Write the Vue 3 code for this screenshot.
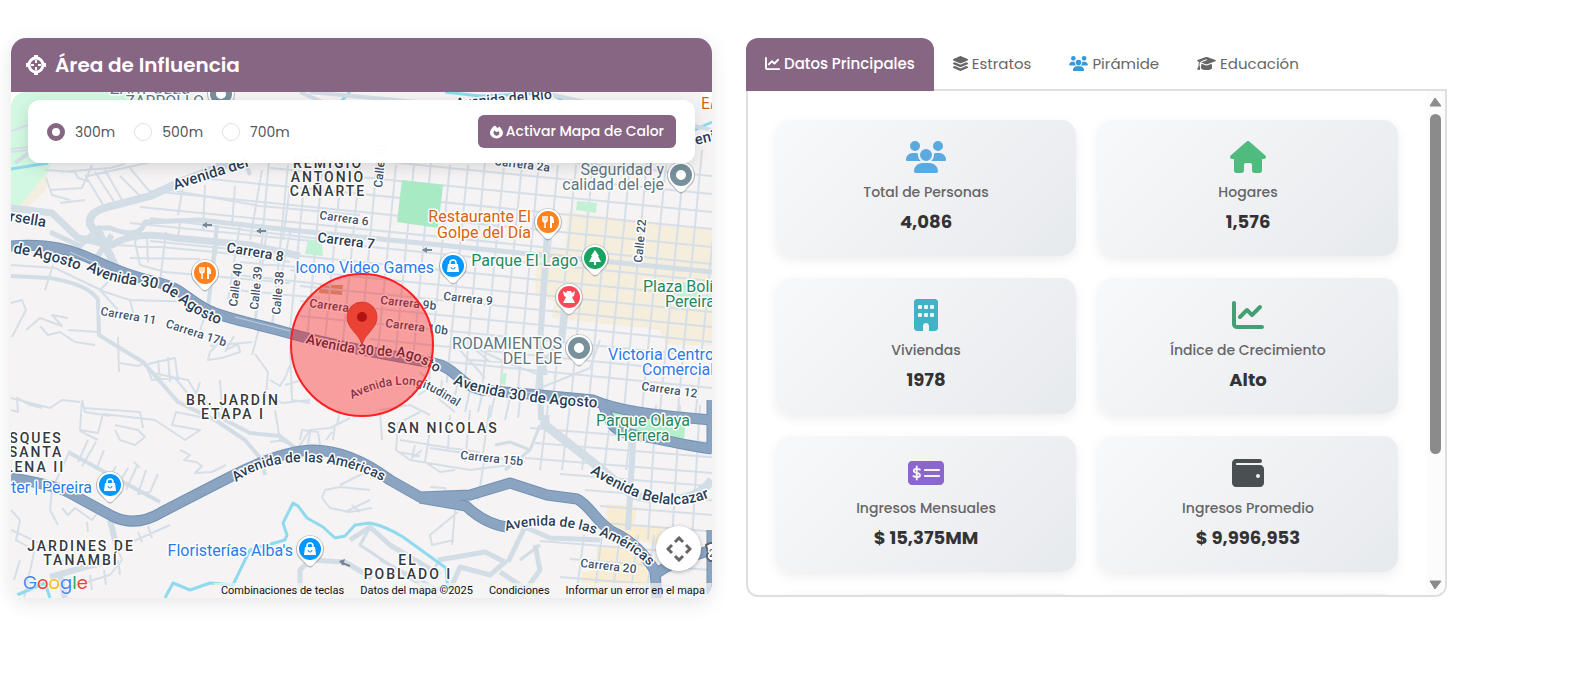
<script setup>
import { ref } from 'vue'

const radius = ref('300m')
const radii = ['300m', '500m', '700m']
const activeTab = ref('Datos Principales')

const icons = {
  users: { box: '0 0 640 512', d: 'M144 0a80 80 0 1 1 0 160A80 80 0 1 1 144 0zM512 0a80 80 0 1 1 0 160A80 80 0 1 1 512 0zM0 298.7C0 239.8 47.8 192 106.7 192h42.7c15.9 0 31 3.5 44.6 9.7c-1.3 7.2-1.9 14.7-1.9 22.3c0 38.2 16.8 72.5 43.3 96H21.3C9.6 320 0 310.4 0 298.7zM405.3 320c26.6-23.5 42.6-57.8 42.6-96c0-7.6-.7-15-1.9-22.3c13.6-6.3 28.7-9.7 44.6-9.7h42.7C592.2 192 640 239.8 640 298.7c0 11.8-9.6 21.3-21.3 21.3H405.3zM224 224a96 96 0 1 1 192 0 96 96 0 1 1 -192 0zM128 485.3C128 411.7 187.7 352 261.3 352H378.7C452.3 352 512 411.7 512 485.3c0 14.7-11.9 26.7-26.7 26.7H154.7c-14.7 0-26.7-11.9-26.7-26.7z' },
  house: { box: '0 0 576 512', d: 'M575.8 255.5c0 18-15 32.1-32 32.1h-32l.7 160.2c0 2.7-.2 5.4-.5 8.1V472c0 22.1-17.9 40-40 40H456c-1.1 0-2.2 0-3.3-.1c-1.4 .1-2.8 .1-4.2 .1H416 392c-22.1 0-40-17.9-40-40V448 384c0-17.7-14.3-32-32-32H256c-17.7 0-32 14.3-32 32v64 24c0 22.1-17.9 40-40 40H160 128.1c-1.5 0-3-.1-4.5-.2c-1.2 .1-2.4 .2-3.6 .2H104c-22.1 0-40-17.9-40-40V360c0-.9 0-1.9 .1-2.8V287.6H32c-18 0-32-14-32-32.1c0-9 3-17 10-24L266.4 8c7-7 15-8 22-8s15 2 21 7L564.8 231.5c8 7 12 15 11 24z' },
  building: { box: '0 0 384 512', d: 'M48 0C21.500 0 0 21.500 0 48V464c0 26.500 21.500 48 48 48h96V432c0-26.500 21.500-48 48-48s48 21.500 48 48v80h96c26.500 0 48-21.500 48-48V48c0-26.500-21.500-48-48-48zM80 96h32q16 0 16 16v32q0 16-16 16H80q-16 0-16-16v-32q0-16 16-16zM176 96h32q16 0 16 16v32q0 16-16 16h-32q-16 0-16-16v-32q0-16 16-16zM272 96h32q16 0 16 16v32q0 16-16 16h-32q-16 0-16-16v-32q0-16 16-16zM80 224h32q16 0 16 16v32q0 16-16 16H80q-16 0-16-16v-32q0-16 16-16zM176 224h32q16 0 16 16v32q0 16-16 16h-32q-16 0-16-16v-32q0-16 16-16zM272 224h32q16 0 16 16v32q0 16-16 16h-32q-16 0-16-16v-32q0-16 16-16z' },
  chart: { box: '0 0 512 512', d: 'M64 64c0-17.700-14.300-32-32-32S0 46.300 0 64V400c0 44.200 35.800 80 80 80H480c17.700 0 32-14.300 32-32s-14.300-32-32-32H80c-8.800 0-16-7.200-16-16V64zm406.600 86.600c12.500-12.500 12.500-32.800 0-45.300s-32.800-12.500-45.300 0L320 210.700l-57.400-57.400c-12.500-12.500-32.800-12.500-45.300 0l-112 112c-12.500 12.500-12.500 32.800 0 45.300s32.800 12.500 45.300 0L240 221.300l57.400 57.400c12.500 12.500 32.800 12.500 45.300 0l128-128z' },
  check: { box: '0 0 576 512', d: 'M64 64C28.700 64 0 92.700 0 128V384c0 35.300 28.700 64 64 64H512c35.300 0 64-28.700 64-64V128c0-35.300-28.700-64-64-64zM272 192H496c8.800 0 16 7.200 16 16s-7.200 16-16 16H272c-8.800 0-16-7.200-16-16s7.200-16 16-16zM272 288H496c8.800 0 16 7.200 16 16s-7.200 16-16 16H272c-8.800 0-16-7.200-16-16s7.200-16 16-16z', line: 'M140 152V360M190 201C160 186 94 180 92 222C90 266 194 242 192 290C190 330 124 326 86 307' },
  wallet: { box: '0 0 512 512', d: 'M64 32C28.700 32 0 60.700 0 96V416c0 35.300 28.700 64 64 64H448c35.300 0 64-28.700 64-64V192c0-35.300-28.700-64-64-64H80c-8.800 0-16-7.200-16-16s7.200-16 16-16H448c17.700 0 32-14.300 32-32s-14.300-32-32-32H64zM416 272a32 32 0 1 1 0 64 32 32 0 1 1 0-64z' },
  layers: { box: '32 0 512 512', d: 'M264.500 5.200c14.900-6.900 32.100-6.900 47 0l218.600 101c8.500 3.900 13.900 12.400 13.900 21.800s-5.400 17.900-13.900 21.800l-218.600 101c-14.900 6.900-32.100 6.900-47 0L45.900 149.800C37.400 145.800 32 137.300 32 128s5.400-17.900 13.900-21.800L264.500 5.200zM476.900 209.600l53.200 24.600c8.500 3.900 13.900 12.400 13.900 21.800s-5.400 17.900-13.900 21.800l-218.600 101c-14.900 6.900-32.100 6.900-47 0L45.900 277.800C37.400 273.800 32 265.300 32 256s5.400-17.900 13.900-21.800l53.200-24.600 152 70.200c23.400 10.800 50.400 10.800 73.800 0l152-70.200zm-152 198.200l152-70.200 53.200 24.600c8.500 3.900 13.900 12.400 13.900 21.800s-5.400 17.900-13.900 21.800l-218.600 101c-14.900 6.900-32.100 6.900-47 0L45.900 405.800C37.400 401.800 32 393.300 32 384s5.400-17.900 13.900-21.800l53.200-24.600 152 70.200c23.400 10.800 50.400 10.800 73.800 0z' },
  cap: { box: '0 0 640 512', d: 'M320 32c-8.100 0-16.100 1.400-23.700 4.100L15.800 137.400C6.300 140.900 0 149.900 0 160s6.300 19.100 15.800 22.600l57.900 20.900C57.300 229.300 48 259.800 48 291.900v28.100c0 28.400-10.800 57.700-22.300 80.800c-6.500 13-13.900 25.800-22.500 37.600C0 442.700-.9 448.300 .9 453.400s6 8.900 11.200 10.200l64 16c4.200 1.100 8.700 .3 12.400-2s6.300-6.100 7.100-10.400c8.600-42.800 4.300-81.200-2.100-108.700C90.300 344.300 86 329.800 80 316.500V291.900c0-30.200 10.200-58.700 27.900-81.500c12.900-15.500 29.600-28 49.200-35.700l157-61.700c8.200-3.200 17.500 .8 20.700 9s-.8 17.500-9 20.700l-157 61.700c-12.400 4.900-23.300 12.400-32.200 21.600l159.600 57.600c7.600 2.700 15.600 4.100 23.700 4.100s16.100-1.400 23.700-4.100L624.200 182.600c9.500-3.400 15.800-12.500 15.800-22.600s-6.300-19.100-15.800-22.600L343.700 36.100C336.100 33.400 328.100 32 320 32zM128 408c0 35.300 86 72 192 72s192-36.700 192-72L496.700 262.600 354.500 314c-11.100 4-22.800 6-34.500 6s-23.500-2-34.500-6L143.300 262.600 128 408z' }
}

const tabs = [
  { name: 'Datos Principales', icon: 'chart', wide: false },
  { name: 'Estratos', icon: 'layers', wide: false },
  { name: 'Pirámide', icon: 'users', wide: true, color: '#3498db' },
  { name: 'Educación', icon: 'cap', wide: true }
]

const cards = [
  { label: 'Total de Personas', value: '4,086', icon: 'users', color: '#5aaae0' },
  { label: 'Hogares', value: '1,576', icon: 'house', color: '#50bb7f' },
  { label: 'Viviendas', value: '1978', icon: 'building', color: '#42b3c6' },
  { label: 'Índice de Crecimiento', value: 'Alto', icon: 'chart', color: '#459f74' },
  { label: 'Ingresos Mensuales', value: '$ 15,375MM', icon: 'check', color: '#8b66cb' },
  { label: 'Ingresos Promedio', value: '$ 9,996,953', icon: 'wallet', color: '#4a4f51' }
]

/* Street grids: rows fall gently to the east, columns lean to the west. */
const northRows = [150, 168, 186, 203, 221, 238, 255, 271, 286, 301, 316, 331, 347, 362].map((y, i) => {
  const x = [150, 270, 270, 190, 150, 140, 130, 150, 290, 300, 300, 300, 370, 420][i]
  return `M${x} ${y + (x - 450) * 0.1}L712 ${y + 26}`
}).join('')
const northColumns = Array.from({ length: 27 }, (_, i) => {
  const x = 262 + i * 18
  const end = x < 440 ? 325 + (x - 262) * 0.22 : 380 + (x - 440) * 0.14
  const start = i % 3 === 0 ? 150 : 165
  return `M${x + 8} ${start}L${x - (end - 250) * 0.1} ${end}`
}).join('')
const southRows = [428, 443, 458, 474, 490, 506, 523, 541, 559, 577].map((y, i) => {
  const x = [530, 535, 525, 560, 585, 600, 605, 540, 570, 560][i]
  return `M${x} ${y}L712 ${y + (712 - x) * 0.08}`
}).join('')
const southColumns = [548, 570, 590, 612, 634, 656, 680, 700]
  .map((x) => `M${x} ${405}L${x - 8} ${x < 640 ? 470 : 540}`).join('')
const deepColumns = [580, 598, 616, 634, 650]
  .map((x) => `M${x + 4} 535L${x - 4} 598`).join('')

const streets = [
  'M11 131L28 125 42 105M11 149L28 147M11 152L60 146M45 170L75 172 78 178 90 182M50 190L82 188 92 165M46 178L52 195 70 200',
  'M60 172L110 168 125 164M85 175L105 208M95 172L115 203M105 170L122 200M120 176L140 196M130 168L150 192M60 203L85 200M88 176L160 160',
  'M170 190L260 206 360 215M184 180L178 215M205 185L203 230M235 186L232 225M262 170L250 240M290 186L283 240M150 218L260 232 330 240',
  'M145 222L135 242 140 265 165 272 290 283M113 245L160 247 215 252 290 262M130 258L200 259M147 238L148 262M166 232L160 282M180 222L178 238',
  'M240 225L228 300M267 228L256 318M290 232L272 322M218 238L208 308 200 330M240 262L330 270M238 275L330 285M235 290L320 298',
  'M11 265L55 268 105 292 130 300 198 302M53 265L45 290M108 282L100 290 118 310M130 300L135 320',
  'M11 303L22 300 26 310 12 337M26 330L40 318 62 326 52 315 68 318M40 326L48 335 60 332 75 342 95 345M68 330L98 332M118 337L119 372M120 363L138 366 146 362',
  'M218 344L210 352 208 360 222 358 240 352 238 344 226 350M210 346L252 342M234 336L225 352M145 362L152 380 175 378 190 396M148 364L175 358 178 380M152 373L188 380 200 400M158 360L160 380M168 357L170 382',
  'M260 325L252 355M290 345L292 400 310 403M255 354L268 372 266 395 282 403 310 400M270 380L280 386 286 376 290 365M285 385L302 380M200 382L196 395M220 380L222 410',
  'M82 400L80 430 98 433 103 414 155 420 185 440 200 430 172 425 176 412 205 418M115 425L138 430 145 437 135 445 120 440 115 430M84 408L140 412 143 428M180 450L190 455 184 460 196 462 202 466 195 473 212 472 226 465',
  'M98 440L80 431M96 442L82 466M88 440L78 462M104 450L96 470M116 466L102 492M128 468L116 488M137 466L126 490M146 470L138 494 150 492 158 474M134 462L140 468',
  'M70 450L52 490 50 510 58 525M62 508L68 515 75 508 92 520 98 512M87 522L88 532M70 512L70 514M11 510L20 520 16 540 30 548M11 530L50 548M20 560L14 580M35 548L24 598M48 552L60 560 80 565M60 590L110 575 122 560 118 550 130 545M90 575L92 590M104 570L106 585M118 560L120 575',
  'M125 545L170 525M130 548L128 538M142 542L138 532M152 538L148 526M11 410L18 412 17 398 30 405 42 408M11 398L50 408 62 400 80 402M82 400L85 412 110 416',
  'M322 498L325 490 340 487 370 490M322 498L330 508 350 512 372 508M352 505L360 512M370 500L345 512',
  'M275 410L280 440 298 448 310 430 330 428 350 418M300 440L302 430 318 432 320 445M308 445L310 432M326 440L332 432M335 425L333 440M270 442L285 440M340 410L337 425M380 412L382 440',
  'M398 425L396 450 410 460 470 470 510 465M400 440L450 448 480 452M415 445L412 458 422 450M430 430L425 462 440 472 455 470M450 415L448 450M470 410L465 462 M490 405L482 460M398 452L420 456 M430 448L525 462',
  'M370 470L340 485M485 455L478 500M458 512L430 535 432 545 454 540M455 510L452 545M400 490L450 500M430 487L445 488 446 495',
  'M418 395L430 388 440 398M432 385L420 372M442 380L440 400 455 412M460 375L455 395M470 390L465 412M482 395L478 412M495 395L490 418M510 398L505 420M520 400L518 418M380 410L410 405 430 415 M395 425L420 412',
  'M540 375L505 362 470 360M505 362L480 350M540 388L590 368 600 340M460 350L485 378M470 345L490 362'
].join('')

const roads = [
  { d: 'M250 155L185 180 150 196 108 207Q88 212 90 224L108 252Q115 262 112 270', w: 8 },
  { d: 'M11 208L52 213 78 238 112 245Q135 230 175 238L250 245 300 256', w: 7 },
  { d: 'M50 232L80 246 98 228 110 228Q140 240 145 222L200 220 290 230 712 272', w: 5 },
  { d: 'M98 228L118 270M112 235L95 260 70 248', w: 6 },
  { d: 'M217 225L208 308M245 160L250 175', w: 4 },
  { d: 'M548 215L540 345 545 375M567 300L562 340 540 368 541 420', w: 6 },
  { d: 'M545 415L545 425 590 460 632 495Q690 510 712 480', w: 9 },
  { d: 'M635 410L628 530', w: 6 },
  { d: 'M11 276L50 278Q90 285 98 300L99 335 115 345 143 362 178 402 215 420 245 440 262 460 265 475', w: 4 },
  { d: 'M200 398L225 420 250 433 280 436 295 448', w: 4 },
  { d: 'M70 453L110 475 160 502', w: 4 },
  { d: 'M110 520L117 548M50 577L85 567 105 562', w: 6 },
  { d: 'M60 575L65 598', w: 6 },
  { d: 'M300 590L300 570 310 560 345 562 372 578M350 540L370 527 390 545 440 575', w: 5 },
  { d: 'M438 560L485 552 505 562 490 575 460 567 450 590M525 527L508 562M525 527L550 538 600 540M535 545L540 570 520 598M500 572L540 598', w: 5 },
  { d: 'M438 562L430 578M370 527L360 545 440 598M380 560L440 590', w: 3 },
  { d: 'M540 545L520 560 M505 470L530 450 540 425M530 450L510 442 495 445', w: 3 },
  { d: 'M15 163L40 145 60 112M300 92L340 110M540 92L712 130M310 92L460 106', w: 4 }
]

const highways = [
  'M11 246C50 243 72 250 96 261S135 277 160 283 190 304 215 313 250 322 292 334 410 359 433 363 460 386 482 390L540 395 593 400C615 410 650 415 712 420',
  'M603 403C610 425 612 432 640 436S680 445 712 449',
  'M11 478Q50 484 68 492L112 516Q136 528 162 512L230 477Q280 451 312 450Q350 450 390 480L420 497 470 495 510 483 547 495 577 499C590 505 598 525 615 533S646 556 655 571L657 598',
  'M420 498L466 506Q485 524 507 527M657 573Q675 560 712 550M712 400V452M712 530V598'
]

const streetPaths = [
  { id: 'st1', d: 'M13 253Q46 258 79 270', text: 'de Agosto' },
  { id: 'st2', d: 'M86 269C116 290 150 282 167 293S197 319 226 326', text: 'Avenida 30 de Agosto' },
  { id: 'st3', d: 'M305 343Q355 356 390 356T454 390', text: 'Avenida 30 de Agosto', tight: true },
  { id: 'st4', d: 'M453 384Q500 403 608 408', text: 'Avenida 30 de Agosto' },
  { id: 'st5', d: 'M236 482C270 455 340 453 398 490', text: 'Avenida de las Américas', tight: true },
  { id: 'st6', d: 'M506 531C570 512 640 546 660 580', text: 'Avenida de las Américas', tight: true },
  { id: 'st7', d: 'M590 473C620 492 668 520 716 494', text: 'Avenida Belalcazar' },
  { id: 'st8', d: 'M175 190L265 161', text: 'Avenida del' },
  { id: 'st9', d: 'M9 221L58 229', text: 'rsella' },
  { id: 'st10', d: 'M226 252L298 264', text: 'Carrera 8', tight: true },
  { id: 'st11', d: 'M317 242L390 251', text: 'Carrera 7', tight: true },
  { id: 'st12', d: 'M456 108L570 97', text: 'Avenida del Río', tight: true },
  { id: 'st13', d: 'M696 145L750 132', text: 'enida' }
]
const minorPaths = [
  { id: 'mn1', d: 'M319 219L385 228', text: 'Carrera 6' },
  { id: 'mn2', d: 'M100 315L170 327', text: 'Carrera 11' },
  { id: 'mn3', d: 'M165 327Q205 340 245 353', text: 'Carrera 17b' },
  { id: 'mn4', d: 'M309 307L370 315', text: 'Carrera' },
  { id: 'mn5', d: 'M380 304L455 312', text: 'Carrera 9b' },
  { id: 'mn6', d: 'M385 327L465 337', text: 'Carrera 10b' },
  { id: 'mn7', d: 'M443 300L510 307', text: 'Carrera 9' },
  { id: 'mn8', d: 'M641 390L720 401', text: 'Carrera 12' },
  { id: 'mn9', d: 'M460 459L545 468', text: 'Carrera 15b' },
  { id: 'mn10', d: 'M580 567L660 576', text: 'Carrera 20' },
  { id: 'mn11', d: 'M352 399Q400 375 430 391T482 424', text: 'Avenida Longitudinal' },
  { id: 'mn12', d: 'M237 307L244 250', text: 'Calle 40' },
  { id: 'mn13', d: 'M258 310L264 250', text: 'Calle 39' },
  { id: 'mn14', d: 'M280 315L286 250', text: 'Calle 38' },
  { id: 'mn15', d: 'M642 263L648 200', text: 'Calle 22' },
  { id: 'mn16', d: 'M382 188L388 130', text: 'Calle 30' },
  { id: 'mn17', d: 'M494 165L560 173', text: 'Carrera 2a' }
]

const areas = [
  [328, 168, 'REMIGIO'], [328, 182, 'ANTONIO'], [328, 196, 'CAÑARTE'],
  [233, 405, 'BR. JARDÍN'], [233, 419, 'ETAPA I'], [443, 433, 'SAN NICOLAS'],
  [36, 443, 'SQUES'], [36, 457, 'SANTA'], [35, 472, 'LENA II'],
  [81, 551, 'JARDINES DE'], [81, 565, 'TANAMBÍ'], [408, 565, 'EL'], [408, 579, 'POBLADO I']
]

const places = [
  [531, 222, 'Restaurante El', 'food', 'end'], [531, 238, 'Golpe del Día', 'food', 'end'],
  [434, 273, 'Icono Video Games', 'shop', 'end'], [578, 266, 'Parque El Lago', 'park', 'end'],
  [643, 292, 'Plaza Bolívar', 'park', 'start'], [665, 307, 'Pereira', 'park', 'start'],
  [664, 175, 'Seguridad y', 'civic', 'end'], [664, 190, 'calidad del eje', 'civic', 'end'],
  [562, 349, 'RODAMIENTOS', 'civic', 'end'], [562, 364, 'DEL EJE', 'civic', 'end'],
  [608, 360, 'Victoria Centro', 'shop', 'start'], [642, 375, 'Comercial', 'shop', 'start'],
  [643, 426, 'Parque Olaya', 'park', 'middle'], [643, 441, 'Herrera', 'park', 'middle'],
  [92, 493, 'ter | Pereira', 'shop', 'end'], [293, 556, "Floristerías Alba's", 'shop', 'end'],
  [701, 109, 'Entre', 'food', 'start'], [110, 94, 'ZART OLLO', 'civic', 'start'], [204, 107, 'ZARROLLO', 'civic', 'end']
]

const pins = [
  { x: 205, y: 273, kind: 'food', color: '#ff8120' },
  { x: 548, y: 222, kind: 'food', color: '#ff8120' },
  { x: 453, y: 266, kind: 'bag', color: '#0596ff' },
  { x: 110, y: 485, kind: 'bag', color: '#0596ff' },
  { x: 310, y: 549, kind: 'bag', color: '#0596ff' },
  { x: 595, y: 258, kind: 'tree', color: '#1aa260' },
  { x: 569, y: 297, kind: 'sight', color: '#ff4757' },
  { x: 579, y: 348, kind: 'dot', color: '#78909c' },
  { x: 681, y: 175, kind: 'dot', color: '#78909c' },
  { x: 221, y: 94, kind: 'dot', color: '#78909c' }
]
</script>

<template>
  <main class="page">
    <section class="influence">
      <header class="influence-head">
        <svg class="target" viewBox="0 0 20 20" aria-hidden="true">
          <circle cx="10" cy="10" r="7" fill="none" stroke="#fff" stroke-width="3" />
          <path d="M10 0V4M10 16V20M0 10H4M16 10H20" stroke="#fff" stroke-width="4" />
          <path d="M10 5V8M10 12V15M5 10H8M12 10H15" stroke="#fff" stroke-width="2" />
        </svg>
        <h1>Área de Influencia</h1>
      </header>

      <div class="map">
        <svg class="map-canvas" viewBox="11 92 701 506" preserveAspectRatio="xMidYMid slice" role="img" aria-label="Mapa de Pereira">
          <rect x="11" y="92" width="701" height="506" fill="#f5f3f4" />
          <path d="M11 92H148L140 105 50 165 46 178 12 214H11z" fill="#d3f8e2" />
          <path d="M48 172L46 190 24 211 11 216Z" fill="#f3eee0" />
          <path d="M568 212L712 230V346L665 344 660 330 552 318 555 302 535 294 537 250 565 250z" fill="#f6eedc" />
          <path d="M607 504L637 506 634 524 662 526 660 546 606 532zM597 545L645 550 650 595 580 590 582 572 596 570z" fill="#f8edd3" />
          <path d="M320 285L343 285 342 295 319 293z" fill="#c9b68c" />
          <path d="M11 169L48 163M300 143L350 92M445 92L480 96 550 93 570 105M690 132L712 122" class="water" />
          <g class="street">
            <path :d="northRows" />
            <path :d="northColumns" />
            <path :d="southRows" />
            <path :d="southColumns" />
            <path :d="deepColumns" />
            <path :d="streets" />
          </g>
          <path d="M402 180L443 185 438 228 397 222z" fill="#a8eac4" />
          <path d="M577 201L597 203 596 213 576 210zM308 239L322 243 323 256 305 254zM678 282L699 284 697 297 677 296zM502 374L507 373 505 385 500 383z" fill="#c3f1d5" />
          <path d="M600 407L686 418 684 440 620 434z" fill="#b4efcb" />
          <path v-for="road in roads" :key="road.d" :d="road.d" :stroke-width="road.w" class="road" />
          <circle cx="545" cy="424" r="4" class="road" stroke-width="2" />
          <path d="M165 598L173 583 190 590 210 583 233 585 245 560 250 550 285 540 287 535 283 523 293 503 298 506 307 518 323 527 335 538 345 536 355 525 370 523Q385 526 403 537L446 568L448 590M17 595L45 583 50 598" class="water" />
          <path v-for="d in highways" :key="d" :d="d" class="highway-edge" />
          <path v-for="d in highways" :key="d" :d="d" class="highway" />
          <path d="M235 317L290 331M470 386L535 393M70 252L100 265" stroke="#c0cfdf" stroke-width="1" fill="none" />
          <path d="M203 225h9M257 231h9M423 250h9M342 563l8 3" stroke="#76879a" stroke-width="2" />
          <path d="M207 222l-5 3 5 3zM261 228l-5 3 5 3zM427 247l-5 3 5 3zM345 559l-6 2 4 5z" fill="#76879a" />

          <defs>
            <path v-for="s in [...streetPaths, ...minorPaths]" :id="s.id" :key="s.id" :d="s.d" />
          </defs>
          <text v-for="s in streetPaths" :key="s.id" class="avenue" :class="{ tight: s.tight }"><textPath :href="'#' + s.id">{{ s.text }}</textPath></text>
          <text v-for="s in minorPaths" :key="s.id" class="minor"><textPath :href="'#' + s.id">{{ s.text }}</textPath></text>
          <text v-for="a in areas" :key="a[2]" :x="a[0]" :y="a[1]" class="area">{{ a[2] }}</text>
          <text v-for="p in places" :key="p[2]" :x="p[0]" :y="p[1]" :text-anchor="p[4]" class="place" :class="p[3]">{{ p[2] }}</text>

          <g v-for="p in pins" :key="p.x" :transform="`translate(${p.x} ${p.y})`">
            <path d="M-11 9L-3 17Q0 20 3 17L11 9A14 14 0 1 0-11 9z" fill="#5f6368" opacity=".4" />
            <path d="M-10 8L-3 16Q0 18 3 16L10 8A13 13 0 1 0-10 8z" fill="#fff" />
            <circle r="11" :fill="p.color" />
            <g v-if="p.kind === 'food'" fill="none" stroke="#fff">
              <path d="M-5-6V-2Q-5 0-3 0Q-1 0-1-2V-6M-3-6V6" stroke-width="1.500" />
              <path d="M3 6V-5Q5-5 5 0H3" stroke-width="2" fill="#fff" />
            </g>
            <g v-else-if="p.kind === 'bag'">
              <path d="M-5-2H5L6 6H-6z" fill="#fff" />
              <path d="M-3-1V-3a3 3 0 0 1 6 0V-1" fill="none" stroke="#fff" stroke-width="1.500" />
              <path d="M-2 1a2 2 0 0 0 4 0" fill="none" stroke="#0596ff" stroke-width="1" />
            </g>
            <path v-else-if="p.kind === 'tree'" d="M0-8L4-2H3L6 4H1V7H-1V4H-6L-3-2H-4z" fill="#fff" />
            <path v-else-if="p.kind === 'sight'" d="M-6-6L-3-4-2-6H2L3-4 6-6 5-1 3 0 6 6H-6L-3 0-5-1z" fill="#fff" />
            <circle v-else r="5" fill="#fff" />
          </g>

          <circle cx="362" cy="345" r="71" fill="#ff0000" fill-opacity=".35" stroke="#ff1f24" stroke-width="2" />
          <path d="M362 345C360 334 347 329 347 317A15 15 0 0 1 377 317C377 329 364 334 362 345z" fill="#ea4335" stroke="#d93a2d" stroke-width="1" />
          <circle cx="362" cy="317" r="5" fill="#b31412" />
          <g>
            <path d="M706 545l4-2h6v18h-6q-5-4-2-8z" fill="#fff" stroke="#5f6368" stroke-width="2" />
            <text x="709" y="557" class="shield">29</text>
          </g>
        </svg>

        <div class="controls">
          <div class="radios">
            <label v-for="r in radii" :key="r">
              <input v-model="radius" type="radio" name="radius" :value="r" />
              <span>{{ r }}</span>
            </label>
          </div>
          <button type="button" class="heat">
            <svg viewBox="0 0 14 14" aria-hidden="true">
              <path fill-rule="evenodd" d="M5 0Q7 1 8 3L10 1Q14 5 14 8A7 6 0 0 1 0 8Q0 4 5 0zM5 5Q3 7 4 9Q5 11 7 11Q10 11 10 8Q10 7 9 6L8 7Q6 7 5 5z" fill="#fff" />
            </svg>
            Activar Mapa de Calor
          </button>
        </div>

        <button type="button" class="camera" aria-label="Controles de cámara del mapa">
          <svg viewBox="0 0 26 26" aria-hidden="true">
            <path d="M9 6L13 2 17 6M9 20L13 24 17 20M6 9L2 13 6 17M20 9L24 13 20 17" />
          </svg>
        </button>

        <a href="#" class="google" aria-label="Google Maps"><span class="b">G</span><span class="r">o</span><span class="y">o</span><span class="b">g</span><span class="g">l</span><span class="r">e</span></a>
        <div class="legal">
          <button type="button">Combinaciones de teclas</button>
          <span>Datos del mapa ©2025</span>
          <a href="#">Condiciones</a>
          <a href="#">Informar un error en el mapa</a>
        </div>
      </div>
    </section>

    <section class="data">
      <nav class="tabs" role="tablist">
        <button
          v-for="t in tabs" :key="t.name" type="button" role="tab"
          :aria-selected="activeTab === t.name" :class="{ active: activeTab === t.name }"
          @click="activeTab = t.name"
        >
          <svg :class="{ wide: t.wide }" :viewBox="icons[t.icon].box" :fill="t.color || 'currentColor'" aria-hidden="true">
            <path :d="icons[t.icon].d" />
          </svg>
          <span>{{ t.name }}</span>
        </button>
      </nav>
      <div class="panel">
        <div class="scroller">
          <div class="cards">
            <article v-for="c in cards" :key="c.label" class="card">
              <svg :viewBox="icons[c.icon].box" :fill="c.color" aria-hidden="true">
                <path fill-rule="evenodd" :d="icons[c.icon].d" />
                <path v-if="icons[c.icon].line" :d="icons[c.icon].line" fill="none" stroke="#f4f5f7" stroke-width="30" stroke-linecap="round" />
              </svg>
              <h2>{{ c.label }}</h2>
              <p>{{ c.value }}</p>
            </article>
            <article class="card"></article>
            <article class="card"></article>
          </div>
        </div>
        <div class="scrollbar" aria-hidden="true">
          <svg viewBox="0 0 13 10"><path d="M6 1L12 9H1z" /></svg>
          <div class="track"><div class="thumb"></div></div>
          <svg viewBox="0 0 13 10"><path d="M6 9L1 1H12z" /></svg>
        </div>
      </div>
    </section>
  </main>
</template>

<style>
body {
  background: #fff;
}
</style>

<style scoped>
* {
  box-sizing: border-box;
}
.page {
  display: grid;
  grid-template-columns: minmax(0, 1fr) minmax(0, 1fr);
  gap: 34px;
  padding: 38px 148px 38px 11px;
  font-family: Poppins, Inter, "Noto Sans", sans-serif;
  color: #666;
}
button {
  border: 0;
  padding: 0;
  background: none;
  font-family: inherit;
  cursor: pointer;
}
.influence {
  display: flex;
  flex-direction: column;
  border-radius: 15px;
  overflow: hidden;
  box-shadow: 0 5px 20px rgba(0, 0, 0, 0.1);
}
.influence-head {
  display: flex;
  align-items: center;
  gap: 9px;
  height: 54px;
  padding: 0 15px;
  background: #876684;
  color: #fff;
}
.target {
  width: 20px;
  height: 20px;
}
h1 {
  margin: 0;
  font-size: 20px;
  line-height: 30px;
  font-weight: 600;
}
.map {
  position: relative;
  height: 506px;
  border-radius: 15px;
  overflow: hidden;
  font-family: Roboto, sans-serif;
}
.map-canvas {
  display: block;
  width: 100%;
  height: 100%;
  font-family: Roboto, sans-serif;
}
.street path,
.road,
.water,
.highway,
.highway-edge {
  fill: none;
  stroke-linejoin: round;
}
.street path {
  stroke: #d6dfe7;
  stroke-width: 2;
}
.road {
  stroke: #d3dde5;
}
.water {
  stroke: #90daee;
  stroke-width: 3;
}
.highway-edge {
  stroke: #7392b4;
  stroke-width: 11;
}
.highway {
  stroke: #8ba4c1;
  stroke-width: 9;
}
text {
  paint-order: stroke;
  stroke: #fff;
  stroke-width: 3px;
  stroke-linejoin: round;
}
.avenue {
  fill: #2b3d57;
  font-size: 15px;
  font-weight: 500;
}
.tight {
  font-size: 14px;
}
.minor {
  fill: #41536d;
  font-size: 12px;
  font-weight: 500;
}
.area {
  fill: #35393d;
  font-size: 14px;
  font-weight: 500;
  letter-spacing: 2px;
  text-anchor: middle;
}
.place {
  font-size: 16px;
}
.food {
  fill: #d9620d;
}
.shop {
  fill: #2a7bea;
}
.park {
  fill: #22885f;
}
.civic {
  fill: #5d7682;
}
.shield {
  fill: #444;
  font-size: 11px;
}
.controls {
  position: absolute;
  top: 8px;
  left: 17px;
  right: 17px;
  display: flex;
  align-items: center;
  justify-content: space-between;
  padding: 15px 19px;
  border-radius: 12px;
  background: rgba(255, 255, 255, 0.98);
  box-shadow: 0 4px 15px rgba(0, 0, 0, 0.12);
  font-family: Poppins, Inter, "Noto Sans", sans-serif;
}
.radios {
  display: flex;
  gap: 19px;
}
.radios label {
  display: flex;
  align-items: center;
  gap: 10px;
  font-size: 14px;
  line-height: 22px;
  color: #555;
}
.radios input {
  appearance: none;
  width: 18px;
  height: 18px;
  margin: 0;
  border: 1px solid #dee2e6;
  border-radius: 50%;
  background: #fff;
}
.radios input:checked {
  border: 5px solid #876684;
}
.heat {
  display: flex;
  align-items: center;
  gap: 3px;
  height: 33px;
  padding: 0 12px;
  border-radius: 6px;
  background: #876684;
  color: #fff;
  font-size: 14px;
  font-weight: 500;
}
.heat svg {
  width: 13px;
  height: 14px;
}
.camera {
  position: absolute;
  right: 11px;
  bottom: 27px;
  display: grid;
  place-items: center;
  width: 45px;
  height: 45px;
  border-radius: 50%;
  background: #fff;
  box-shadow: 0 1px 4px rgba(0, 0, 0, 0.3);
}
.camera svg {
  width: 26px;
  height: 26px;
  fill: none;
  stroke: #666;
  stroke-width: 3;
}
.google {
  position: absolute;
  left: 12px;
  bottom: 2px;
  font-family: Poppins, Lato, sans-serif;
  font-size: 18px;
  line-height: 26px;
  text-decoration: none;
  text-shadow: 0 0 2px #fff, 0 0 2px #fff;
}
.b { color: #4285f4; }
.r { color: #ea4335; }
.y { color: #fbbc04; }
.g { color: #34a853; }
.legal {
  position: absolute;
  right: 0;
  bottom: 0;
  display: flex;
  gap: 16px;
  padding: 0 7px;
  background: rgba(245, 245, 245, 0.7);
  font-size: 11px;
  line-height: 15px;
  color: #111;
}
.legal button,
.legal a {
  color: inherit;
  font-size: 11px;
  line-height: 15px;
  text-decoration: none;
}
.data {
  display: flex;
  flex-direction: column;
}
.tabs {
  position: relative;
  display: flex;
  height: 53px;
}
.tabs button {
  display: flex;
  align-items: center;
  gap: 4px;
  padding: 0 19px 2px;
  border-radius: 12px 12px 0 0;
  font-size: 15px;
  font-weight: 400;
  color: #666;
}
.tabs .active {
  background: #876684;
  color: #fff;
  font-weight: 500;
}
.tabs svg {
  width: 15px;
  height: 15px;
}
.tabs .wide {
  width: 19px;
}
.panel {
  display: flex;
  height: 508px;
  margin-top: -2px;
  border: 2px solid #dfdfdf;
  border-radius: 0 0 12px 12px;
  overflow: hidden;
}
.scroller {
  flex: 1;
  min-width: 0;
  overflow-y: auto;
  scrollbar-width: none;
}
.cards {
  display: grid;
  grid-template-columns: minmax(0, 1fr) minmax(0, 1fr);
  gap: 22px;
  padding: 29px 28px;
}
.card {
  display: flex;
  flex-direction: column;
  align-items: center;
  min-height: 136px;
  padding: 21px 22px;
  border-radius: 15px;
  background: linear-gradient(135deg, #f8f9fa, #edeef1 70%, #e6eaed);
  box-shadow: 0 4px 12px rgba(0, 0, 0, 0.07);
}
.card svg {
  height: 32px;
}
.card h2 {
  margin: 9px 0 0;
  font-size: 14px;
  line-height: 20px;
  font-weight: 500;
  color: #666;
}
.card p {
  margin: 6px 0 0;
  font-size: 18px;
  line-height: 27px;
  font-weight: 700;
  color: #333;
}
.scrollbar {
  display: flex;
  flex-direction: column;
  align-items: center;
  justify-content: space-between;
  gap: 7px;
  width: 19px;
  padding: 6px 3px 5px;
  background: #fcfcfc;
}
.scrollbar svg {
  width: 13px;
  height: 10px;
  fill: #8b8b8b;
  stroke: #8b8b8b;
  stroke-linejoin: round;
}
.track {
  flex: 1;
}
.thumb {
  width: 11px;
  height: 74%;
  border-radius: 6px;
  background: #8b8b8b;
}
</style>
